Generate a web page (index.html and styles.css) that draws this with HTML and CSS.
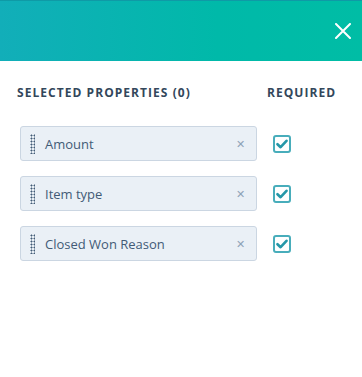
FILE: index.html
```html
<!DOCTYPE html>
<html>
<head>
<meta charset="utf-8">
<link rel="stylesheet" href="styles.css">
</head>
<body>
<header class="header">
  <button class="close" aria-label="Close">
    <svg width="16" height="16" viewBox="0 0 16 16"><path d="M1 1L15 15M15 1L1 15" stroke="#fff" stroke-width="2" stroke-linecap="round"/></svg>
  </button>
</header>
<main class="panel">
  <div class="grid">
    <div class="heading">SELECTED PROPERTIES (0)</div>
    <div class="heading">REQUIRED</div>

    <div class="item"><span class="handle"></span><span class="label">Amount</span><span class="remove">&#x2715;</span></div>
    <div class="check"><svg width="12" height="10" viewBox="0 0 12 10"><path d="M1.5 5.2L4.6 8.2L10.5 1.8" fill="none" stroke="#2597a8" stroke-width="2.6" stroke-linecap="round" stroke-linejoin="round"/></svg></div>

    <div class="item"><span class="handle"></span><span class="label">Item type</span><span class="remove">&#x2715;</span></div>
    <div class="check"><svg width="12" height="10" viewBox="0 0 12 10"><path d="M1.5 5.2L4.6 8.2L10.5 1.8" fill="none" stroke="#2597a8" stroke-width="2.6" stroke-linecap="round" stroke-linejoin="round"/></svg></div>

    <div class="item"><span class="handle"></span><span class="label">Closed Won Reason</span><span class="remove">&#x2715;</span></div>
    <div class="check"><svg width="12" height="10" viewBox="0 0 12 10"><path d="M1.5 5.2L4.6 8.2L10.5 1.8" fill="none" stroke="#2597a8" stroke-width="2.6" stroke-linecap="round" stroke-linejoin="round"/></svg></div>
  </div>
</main>
</body>
</html>
```
FILE: styles.css
```css
html, body {
  margin: 0;
  padding: 0;
  background: #fff;
  font-family: "Open Sans", "Liberation Sans", sans-serif;
  color: #33475b;
}
.header {
  height: 61px;
  background: linear-gradient(90deg, #12aeb9 0%, #00b9a9 60%, #00bda5 100%);
  border-top: 1px solid #0f9aa6;
  box-sizing: border-box;
  display: flex;
  align-items: center;
  justify-content: flex-end;
  padding-right: 11px;
}
.close {
  background: none;
  border: 0;
  padding: 0;
  width: 16px;
  height: 16px;
  display: flex;
  cursor: pointer;
}
.panel {
  padding: 24px 0 0 17px;
}
.grid {
  display: grid;
  grid-template-columns: 250px auto;
  row-gap: 15px;
  align-items: center;
}
.heading {
  font-size: 12px;
  font-weight: 700;
  letter-spacing: 1.05px;
  color: #33475b;
  line-height: 16px;
  margin-bottom: 10px;
}
.item {
  margin-left: 3px;
  width: 237px;
  height: 35px;
  box-sizing: border-box;
  background: #eaf0f6;
  border: 1px solid #cbd6e2;
  border-radius: 3px;
  display: flex;
  align-items: center;
  padding: 0 11px 0 9px;
}
.handle {
  width: 5px;
  height: 20px;
  background-image: radial-gradient(circle, #425b76 0.9px, transparent 1.1px);
  background-size: 3px 3px;
  margin-right: 10px;
  flex: none;
}
.label {
  flex: 1;
  font-size: 13px;
  color: #425b76;
}
.remove {
  font-size: 11px;
  color: #8ea3b8;
}
.check {
  margin-left: 6px;
  width: 18px;
  height: 18px;
  box-sizing: border-box;
  border: 2px solid #48adbb;
  border-radius: 3px;
  display: flex;
  align-items: center;
  justify-content: center;
  background: #fff;
}
```
